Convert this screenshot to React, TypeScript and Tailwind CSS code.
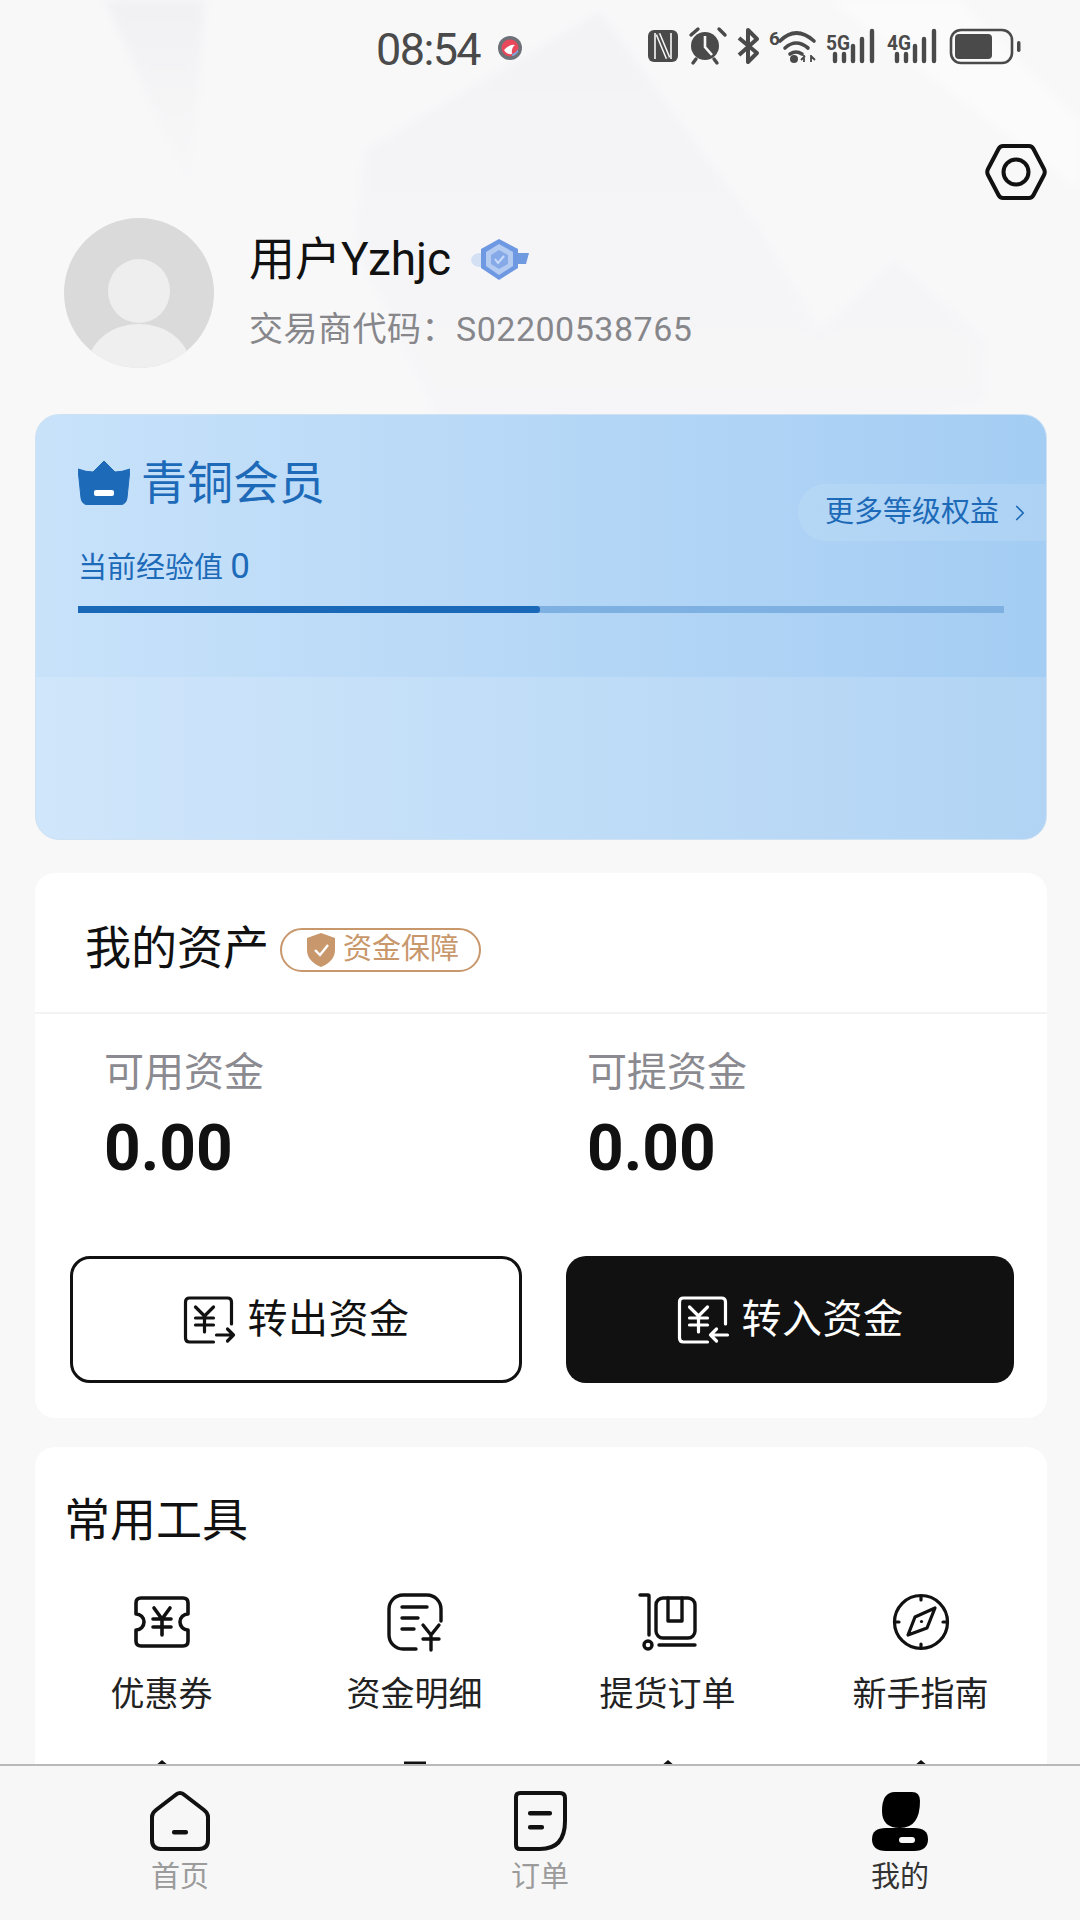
import { ChevronRight } from "lucide-react";

function StatusIcons() {
  const dark = "#4a4a4a";
  return (
    <svg width="390" height="60" viewBox="0 0 390 60" fill="none">
      {/* nfc */}
      <rect x="8" y="11" width="30" height="32" rx="6" fill={dark} />
      <path d="M15 14 L15 40 M31 14 L31 40" stroke="#f8f8f9" strokeWidth="1.6" />
      <path d="M18 15 L28 39" stroke="#f8f8f9" strokeWidth="5" />
      <path d="M18 15 L28 39" stroke={dark} strokeWidth="2" />
      {/* alarm */}
      <circle cx="65" cy="27" r="14" fill={dark} />
      <path d="M65 17 V28 L72 36" stroke="#f8f8f9" strokeWidth="2.6" />
      <path d="M51 16 L58 10 M79 10 L85 16 M56 40 L53 44 M74 40 L77 44" stroke={dark} strokeWidth="3.4" strokeLinecap="round" />
      {/* bluetooth */}
      <path d="M99 19 L117 34 L108 43 V11 L117 20 L99 36" stroke={dark} strokeWidth="4" strokeLinejoin="round" />
      {/* wifi 6 */}
      <text x="129" y="26" fontSize="19" fontWeight="700" fill={dark} fontFamily="Roboto">6</text>
      <path d="M140 22 Q156 6 174 22 M145 29 Q156 19 168 29 M150 35 Q156 31 162 35" stroke={dark} strokeWidth="3.6" strokeLinecap="round" />
      <circle cx="154" cy="40" r="4" fill={dark} />
      <path d="M164 43 V36 M171 43 V36 M161 41 L165 37 M171 37 L175 41" stroke={dark} strokeWidth="1.8" />
      {/* 5g */}
      <text x="186" y="31" fontSize="21" fontWeight="700" fill={dark} fontFamily="Roboto" textLength="24" lengthAdjust="spacingAndGlyphs">5G</text>
      <path d="M195 35 V42 M204 35 V42 M213 27 V42 M222 20 V42 M232 12 V42" stroke={dark} strokeWidth="4.4" strokeLinecap="round" />
      {/* 4g */}
      <text x="247" y="31" fontSize="21" fontWeight="700" fill={dark} fontFamily="Roboto" textLength="24" lengthAdjust="spacingAndGlyphs">4G</text>
      <path d="M257 35 V42 M266 35 V42 M275 27 V42 M284 20 V42 M294 12 V42" stroke={dark} strokeWidth="4.4" strokeLinecap="round" />
      {/* battery */}
      <rect x="311" y="11" width="61" height="33" rx="10" stroke={dark} strokeWidth="2.6" />
      <rect x="315" y="15" width="37" height="25" rx="4" fill={dark} />
      <rect x="377" y="22" width="3.5" height="11" rx="1.7" fill={dark} />
    </svg>
  );
}

function Background() {
  return (
    <svg className="absolute left-0 top-0" width="1080" height="420" viewBox="0 0 1080 420" fill="none">
      <defs>
        <linearGradient id="bgStrip" x1="0" y1="0" x2="0" y2="1">
          <stop offset="0" stopColor="#f1f1f3" />
          <stop offset="1" stopColor="#f8f8f9" />
        </linearGradient>
        <linearGradient id="bgMain" x1="0" y1="0" x2="0" y2="1">
          <stop offset="0" stopColor="#f3f3f6" />
          <stop offset="1" stopColor="#f6f6f8" />
        </linearGradient>
        <filter id="soft"><feGaussianBlur stdDeviation="4" /></filter>
      </defs>
      <path d="M105 0 H205 L190 190 Z" fill="url(#bgStrip)" filter="url(#soft)" />
      <path d="M600 12 L365 150 L355 250 L440 420 H900 L985 400 L985 340 L895 260 L820 330 L760 230 Z" fill="url(#bgMain)" filter="url(#soft)" />
      <path d="M830 0 L1080 190 V120 L960 0 Z" fill="#fbfbfc" filter="url(#soft)" />
    </svg>
  );
}

function Avatar() {
  return (
    <svg width="150" height="150" viewBox="0 0 150 150">
      <defs>
        <clipPath id="avatarClip"><circle cx="75" cy="75" r="75" /></clipPath>
      </defs>
      <circle cx="75" cy="75" r="75" fill="#dadada" />
      <g clipPath="url(#avatarClip)">
        <ellipse cx="75" cy="73" rx="31" ry="32" fill="#eeeeee" />
        <ellipse cx="75" cy="150" rx="52" ry="44" fill="#efefef" />
      </g>
    </svg>
  );
}

function LevelBadge() {
  return (
    <svg width="64" height="44" viewBox="0 0 64 44">
      <ellipse cx="11" cy="22" rx="9" ry="7" fill="#d3e0f4" />
      <path d="M44 15 H60 L57 26 H46 Z" fill="#6f9ae0" />
      <path d="M30 1 L49 11 V30 L30 42 L12 30 V11 Z" fill="#6e98e2" />
      <path d="M30 6 L44 14 V28 L30 37 L17 28 V14 Z" fill="#b4cbf1" />
      <path d="M30 12 L39 17 V26 L30 31 L22 26 V17 Z" fill="#86a9e8" />
      <path d="M26 21 L29 25 L35 18" stroke="#c9dafa" strokeWidth="2" fill="none" />
    </svg>
  );
}

function Crown() {
  return (
    <svg width="52" height="44" viewBox="0 0 52 44">
      <path d="M26 0 L37 11 Q44 11 52 8 L49 37 Q48 44 41 44 H11 Q4 44 3 37 L0 8 Q8 11 15 11 Z" fill="#1d6ab8" stroke="#1d6ab8" strokeLinejoin="round" />
      <rect x="16" y="29" width="20" height="6" rx="2" fill="#fff" />
    </svg>
  );
}

function TransferIcon({ out }: { out: boolean }) {
  return (
    <svg width="53" height="48" viewBox="0 0 52 48" fill="none" stroke="currentColor" strokeWidth="3.2" strokeLinecap="round" strokeLinejoin="round">
      <path d="M30 46 H6 Q2 46 2 42 V6 Q2 2 6 2 H44 Q48 2 48 6 V28" />
      <path d="M12 11 L21 20 L30 11 M21 20 V36 M12 22 H30 M12 29 H30" />
      {out ? <path d="M33 39 H50 M44 33 L50 39 L44 45" /> : <path d="M33 39 H50 M39 33 L33 39 L39 45" />}
    </svg>
  );
}

function CouponIcon() {
  return (
    <svg width="60" height="60" viewBox="0 0 60 60" fill="none" stroke="#111" strokeWidth="3.6" strokeLinecap="round" strokeLinejoin="round">
      <path d="M9 6 H51 Q56 6 56 11 V22 A8 8 0 0 0 56 38 V49 Q56 54 51 54 H9 Q4 54 4 49 V38 A8 8 0 0 0 4 22 V11 Q4 6 9 6 Z" />
      <path d="M22 16 L30 27 L38 16 M30 27 V43 M21 27 H39 M21 35 H39" />
    </svg>
  );
}

function DetailIcon() {
  return (
    <svg width="60" height="60" viewBox="0 0 60 60" fill="none" stroke="#111" strokeWidth="3.4" strokeLinecap="round" strokeLinejoin="round">
      <path d="M31 57 H18 A14 14 0 0 1 4 43 V17 A14 14 0 0 1 18 3 H42 A14 14 0 0 1 56 17 V29" />
      <path d="M17 15 H42 M17 26 H33 M17 37 H29" />
      <path d="M38 33 L46 43 L54 33 M46 43 V58 M38 47 H54" />
    </svg>
  );
}

function PickupIcon() {
  return (
    <svg width="60" height="60" viewBox="0 0 60 60" fill="none" stroke="#111" strokeWidth="3.4" strokeLinecap="round" strokeLinejoin="round">
      <path d="M2 3 H10 Q11 3 11 4 V43" />
      <circle cx="10" cy="53" r="4" />
      <path d="M21 53 H57" />
      <rect x="18" y="6" width="39" height="40" rx="7" />
      <path d="M30 6 V29 H44 V6" />
    </svg>
  );
}

function CompassIcon() {
  return (
    <svg width="60" height="60" viewBox="0 0 60 60" fill="none" stroke="#111" strokeWidth="3.2" strokeLinecap="round" strokeLinejoin="round">
      <circle cx="30" cy="30" r="26.5" />
      <path d="M30 4 V8 M30 52 V56 M4 30 H8 M52 30 H56" />
      <path d="M44 16 L36 36 L17 43 L24 25 Z" />
      <circle cx="30.5" cy="29.5" r="1.6" fill="#111" stroke="none" />
    </svg>
  );
}

function HomeIcon() {
  return (
    <svg width="60" height="60" viewBox="0 0 60 60" fill="none">
      <path d="M30 2 Q27.5 2 25.5 4 L6 19 Q2 22 2 26 V49 Q2 58 11 58 H49 Q58 58 58 49 V26 Q58 22 54 19 L34.5 4 Q32.5 2 30 2 Z" stroke="#111" strokeWidth="4" strokeLinejoin="round" />
      <rect x="22" y="39" width="16" height="4.4" rx="2" fill="#111" />
    </svg>
  );
}

function OrderIcon() {
  return (
    <svg width="60" height="60" viewBox="0 0 60 60" fill="none">
      <path d="M10 2 H50 Q55 2 55 7 V30 Q55 58 30 58 H10 Q6 58 6 54 V6 Q6 2 10 2 Z" stroke="#111" strokeWidth="4" strokeLinejoin="round" />
      <rect x="18" y="20" width="24" height="4.4" rx="2" fill="#111" />
      <rect x="18" y="34" width="16" height="4.4" rx="2" fill="#111" />
    </svg>
  );
}

function MeIcon() {
  return (
    <svg width="60" height="60" viewBox="0 0 60 60">
      <path d="M25 1 H42 Q50 1 50 10 Q50 37 30 37 Q12 37 12 20 Q12 1 25 1 Z" fill="#000" />
      <path d="M16 37 H44 Q58 37 58 48 Q58 60 44 60 H16 Q2 60 2 48 Q2 37 16 37 Z" fill="#000" />
      <rect x="29" y="46" width="16" height="6" rx="3" fill="#f7f7f7" />
    </svg>
  );
}

const tools = [
  { label: "优惠券", icon: <CouponIcon /> },
  { label: "资金明细", icon: <DetailIcon /> },
  { label: "提货订单", icon: <PickupIcon /> },
  { label: "新手指南", icon: <CompassIcon /> },
];

const nav = [
  { label: "首页", icon: <HomeIcon />, color: "text-[#9b9b9b]" },
  { label: "订单", icon: <OrderIcon />, color: "text-[#9b9b9b]" },
  { label: "我的", icon: <MeIcon />, color: "text-[#333333]" },
];

export default function App() {
  return (
    <div className="relative flex h-[1920px] w-[1080px] flex-col overflow-hidden bg-[#f8f8f9] font-['Roboto','Noto_Sans_CJK_SC',sans-serif]">
      <Background />

      <main className="relative min-h-0 flex-1 overflow-hidden">
        {/* status bar */}
        <div className="flex h-[96px] items-center">
          <span className="ml-[376px] mt-[3px] text-[45px] leading-none tracking-[-1.6px] text-[#4a4a4a]">08:54</span>
          <svg className="ml-[18px]" width="24" height="24" viewBox="0 0 24 24">
            <circle cx="12" cy="12" r="12" fill="#6d7178" />
            <circle cx="12" cy="12" r="8.5" fill="#e8485a" />
            <path d="M6 14 Q11 8 17 9 Q13 12 14 18 Q9 19 6 14 Z" fill="#fff" />
            <path d="M14 18 Q18 17 20 13 L20 16 Q17 20 14 20 Z" fill="#7fa6d8" />
          </svg>
          <div className="ml-auto mr-[50px] mt-[2px]">
            <StatusIcons />
          </div>
        </div>

        {/* settings */}
        <div className="mt-[47px] flex justify-end pr-[33px]">
          <svg width="62" height="58" viewBox="0 0 62 58" fill="none" stroke="#111" strokeWidth="4" strokeLinejoin="round">
            <path d="M18 3 H44 Q47 3 48.5 6 L59 26 Q60.5 29 59 32 L48.5 52 Q47 55 44 55 H18 Q15 55 13.5 52 L3 32 Q1.5 29 3 26 L13.5 6 Q15 3 18 3 Z" />
            <circle cx="31" cy="29" r="12.5" />
          </svg>
        </div>

        {/* profile */}
        <div className="mt-[17px] flex items-center pl-[64px]">
          <Avatar />
          <div className="ml-[35px] flex flex-col pb-[5px]">
            <div className="flex items-center">
              <span className="text-[46px] leading-[60px] text-[#111111]">用户Yzhjc</span>
              <span className="ml-[18px] mt-[2px]"><LevelBadge /></span>
            </div>
            <span className="mt-[17px] text-[34px] leading-[46px] tracking-[0.5px] text-[#87878b]">交易商代码：S02200538765</span>
          </div>
        </div>

        {/* member card */}
        <section className="relative ml-[35px] mt-[46px] h-[426px] w-[1012px] overflow-hidden rounded-[24px] border border-[#cfe2f4] bg-gradient-to-r from-[#c8e2fa] to-[#a4cdf3]">
          <div className="absolute inset-x-0 bottom-0 h-[162px] bg-white/15" />
          <div className="absolute right-0 top-[69px] flex h-[57px] w-[248px] items-center rounded-l-[28px] bg-white/10 pl-[27px] text-[29px] text-[#1d6ab8]">
            更多等级权益
            <ChevronRight className="ml-[8px]" size={26} strokeWidth={1.6} />
          </div>
          <div className="relative px-[42px] pt-[38px]">
            <div className="flex h-[60px] items-center">
              <Crown />
              <span className="ml-[11px] text-[46px] leading-none text-[#1d6ab8]">青铜会员</span>
            </div>
            <div className="mt-[34px] text-[29px] leading-[40px] text-[#1d6ab8]">
              当前经验值 <span className="text-[35px]">0</span>
            </div>
            <div className="mt-[18px] h-[7px] w-[926px] bg-[#7fb0e2]">
              <div className="h-full w-[462px] rounded-r-[3px] bg-[#1a69b8]" />
            </div>
          </div>
        </section>

        {/* assets */}
        <section className="ml-[35px] mt-[33px] h-[545px] w-[1012px] rounded-[20px] bg-white">
          <div className="flex h-[141px] items-center border-b-2 border-[#f3f3f3] pl-[50px] pt-[10px]">
            <span className="text-[46px] leading-none text-[#111111]">我的资产</span>
            <span className="ml-[11px] mt-[4px] flex h-[44px] w-[201px] items-center rounded-full border-[2.5px] border-[#c8976b] pl-[25px]">
              <svg width="28" height="34" viewBox="0 0 28 34">
                <path d="M14 0 L28 5 V17 Q28 28 14 34 Q0 28 0 17 V5 Z" fill="#c8976b" />
                <path d="M8 17 L13 22 L21 12" stroke="#fff" strokeWidth="2.4" fill="none" />
              </svg>
              <span className="ml-[8px] text-[29px] leading-none text-[#c8976b]">资金保障</span>
            </span>
          </div>

          <div className="flex pl-[69px] pt-[31px]">
            <div className="w-[483px]">
              <div className="text-[40px] leading-[56px] text-[#8a8a90]">可用资金</div>
              <div className="mt-[10px] text-[64px] font-bold leading-[76px] text-[#111111]">0.00</div>
            </div>
            <div>
              <div className="text-[40px] leading-[56px] text-[#8a8a90]">可提资金</div>
              <div className="mt-[10px] text-[64px] font-bold leading-[76px] text-[#111111]">0.00</div>
            </div>
          </div>

          <div className="mt-[69px] flex gap-[44px] pl-[35px]">
            <button className="flex h-[127px] w-[452px] items-center justify-center gap-[12px] rounded-[20px] border-[3px] border-[#111111] text-[40px] tracking-[0.5px] text-[#111111]">
              <TransferIcon out />
              转出资金
            </button>
            <button className="flex h-[127px] w-[448px] items-center justify-center gap-[12px] rounded-[20px] bg-[#111111] text-[40px] tracking-[0.5px] text-white">
              <TransferIcon out={false} />
              转入资金
            </button>
          </div>
        </section>

        {/* tools */}
        <section className="ml-[35px] mt-[29px] h-[400px] w-[1012px] rounded-[20px] bg-white pt-[48px]">
          <div className="pl-[29px] text-[46px] leading-[50px] text-[#111111]">常用工具</div>
          <div className="mt-[47px] grid grid-cols-4">
            {tools.map((t) => (
              <div key={t.label} className="flex flex-col items-center">
                {t.icon}
                <span className="mt-[20px] text-[34px] leading-[44px] text-[#222222]">{t.label}</span>
              </div>
            ))}
          </div>
          <div className="mt-[44px] grid grid-cols-4">
            {[0, 1, 2, 3].map((i) => (
              <div key={i} className="flex justify-center">
                <svg width="30" height="8" viewBox="0 0 30 8" fill="none" stroke="#111" strokeWidth="3">
                  {i === 1 ? <path d="M4 3 H26" /> : <path d="M8 8 L15 2 L22 8" />}
                </svg>
              </div>
            ))}
          </div>
        </section>
      </main>

      {/* bottom nav */}
      <nav className="relative grid h-[156px] grid-cols-3 border-t-2 border-[#b9b9b9] bg-[#f7f7f7] pt-[25px]">
        {nav.map((n) => (
          <div key={n.label} className="flex flex-col items-center">
            {n.icon}
            <span className={`mt-[6px] text-[29px] leading-[40px] ${n.color}`}>{n.label}</span>
          </div>
        ))}
      </nav>
    </div>
  );
}
